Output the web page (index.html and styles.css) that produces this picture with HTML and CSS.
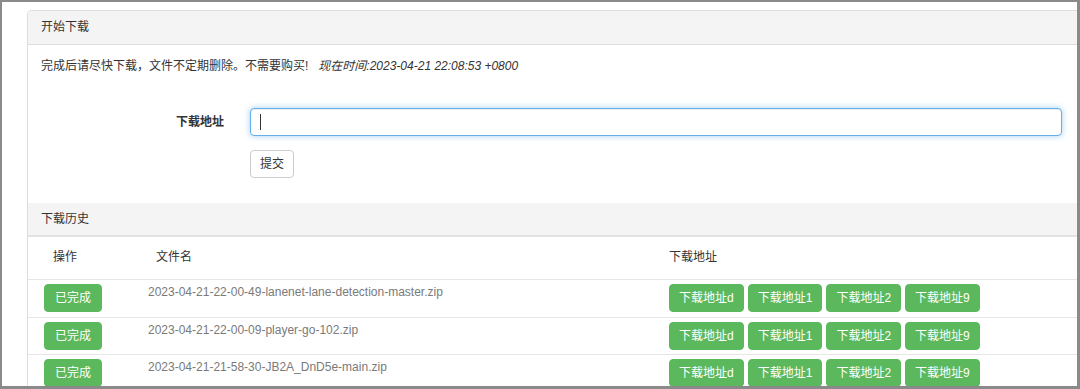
FILE: index.html
```html
<!DOCTYPE html>
<html>
    <head>
        <meta charset="utf-8">
        <meta name="viewport" content="width=device-width, initial-scale=1.0">
        <title>开始下载</title>
        <link rel="stylesheet" href="styles.css">
    </head>
    <body>
        <div class="frame">
            <div class="panel">
                <div class="panel-heading">开始下载</div>
                <div class="panel-body">
                    <p class="notice">完成后请尽快下载，文件不定期删除。不需要购买!<em class="now">现在时间:2023-04-21 22:08:53 +0800</em></p>
                    <form class="form">
                        <label class="form-label" for="url">下载地址</label>
                        <div class="input-wrap"><input class="form-input" id="url" type="text"></div>
                        <span></span>
                        <div><button class="btn btn-default" type="button">提交</button></div>
                    </form>
                </div>
                <div class="panel-heading second">下载历史</div>
                <table class="table">
                    <colgroup>
                        <col class="c-op">
                        <col class="c-name">
                        <col class="c-links">
                    </colgroup>
                    <thead>
                        <tr>
                            <th class="th-op">操作</th>
                            <th class="th-name">文件名</th>
                            <th>下载地址</th>
                        </tr>
                    </thead>
                    <tbody>
                        <tr>
                            <td class="td-op"><span class="btn btn-success">已完成</span></td>
                            <td class="td-name">2023-04-21-22-00-49-lanenet-lane-detection-master.zip</td>
                            <td>
                                <div class="links">
                                    <a class="btn btn-success">下载地址d</a>
                                    <a class="btn btn-success">下载地址1</a>
                                    <a class="btn btn-success">下载地址2</a>
                                    <a class="btn btn-success">下载地址9</a>
                                </div>
                            </td>
                        </tr>
                        <tr>
                            <td class="td-op"><span class="btn btn-success">已完成</span></td>
                            <td class="td-name">2023-04-21-22-00-09-player-go-102.zip</td>
                            <td>
                                <div class="links">
                                    <a class="btn btn-success">下载地址d</a>
                                    <a class="btn btn-success">下载地址1</a>
                                    <a class="btn btn-success">下载地址2</a>
                                    <a class="btn btn-success">下载地址9</a>
                                </div>
                            </td>
                        </tr>
                        <tr>
                            <td class="td-op"><span class="btn btn-success">已完成</span></td>
                            <td class="td-name">2023-04-21-21-58-30-JB2A_DnD5e-main.zip</td>
                            <td>
                                <div class="links">
                                    <a class="btn btn-success">下载地址d</a>
                                    <a class="btn btn-success">下载地址1</a>
                                    <a class="btn btn-success">下载地址2</a>
                                    <a class="btn btn-success">下载地址9</a>
                                </div>
                            </td>
                        </tr>
                    </tbody>
                </table>
            </div>
        </div>
    </body>
</html>
```

FILE: styles.css
```css
*{
    box-sizing: border-box;
}
body{
    margin: 0;
    font-family: "Liberation Sans", "Noto Sans CJK SC", sans-serif;
    font-size: 12px;
    line-height: 17px;
    color: #333;
}
.frame{
    width: 1080px;
    height: 389px;
    border-style: solid;
    border-color: #8a8a8a;
    border-width: 2px 3px 3px 2px;
    background: #fff;
    overflow: hidden;
}
.panel{
    margin: 8px 0 0 25px;
    width: 1100px;
    border: 1px solid #ddd;
    border-radius: 4px;
}
.panel-heading{
    padding: 8px 13px;
    background-color: #f4f4f4;
    border-bottom: 1px solid #ddd;
    border-radius: 3px 3px 0 0;
}
.panel-heading.second{
    border-radius: 0;
    height: 34px;
    border-bottom: 2px solid #e2e2e2;
}
.panel-body{
    padding: 13px 0 25px 0;
}
.notice{
    margin: 0 0 33px 13px;
}
.now{
    margin-left: 10px;
}
.form{
    display: grid;
    grid-template-columns: 196px 812px;
    column-gap: 26px;
    row-gap: 14px;
    align-items: center;
}
.form-label{
    text-align: right;
    font-weight: bold;
}
.input-wrap{
    position: relative;
}
/* text cursor of the focused field */
.input-wrap::after{
    content: "";
    position: absolute;
    left: 10px;
    top: 6px;
    width: 1px;
    height: 16px;
    background: #333;
}
.form-input{
    display: block;
    width: 100%;
    height: 28px;
    padding: 4px 10px;
    font: inherit;
    color: #555;
    border: 1px solid #66afe9;
    border-radius: 4px;
    outline: 0;
    box-shadow: inset 0 1px 1px rgba(0,0,0,.075), 0 0 6px rgba(102,175,233,.6);
}
.btn{
    display: inline-block;
    font-size: 12px;
    line-height: 16px;
    padding: 5px 10px;
    border: 1px solid transparent;
    border-radius: 4px;
    text-align: center;
    white-space: nowrap;
}
.btn-default{
    font-family: inherit;
    padding: 5px 9px;
    color: #333;
    background-color: #fff;
    border-color: #ccc;
}
.btn-success{
    color: #fff;
    background-color: #5cb85c;
    border-color: #5cb85c;
}
.table{
    border-collapse: collapse;
    table-layout: fixed;
    width: 100%;
}
.c-op{
    width: 112px;
}
.c-name{
    width: 521px;
}
.table th{
    text-align: left;
    font-weight: normal;
    padding: 12px 8px 13px;
    border-bottom: 1px solid #e6e6e6;
}
.table th.th-op{
    padding-left: 25px;
}
.table th.th-name{
    padding-left: 16px;
}
.table td{
    padding: 4px 8px 4.5px;
    vertical-align: top;
    border-bottom: 1px solid #e6e6e6;
}
.table td.td-op{
    padding-left: 16px;
}
.td-name{
    color: #7a7a7a;
}
.links{
    display: flex;
    gap: 4px;
}
.links .btn{
    padding: 5px 9px;
}
```
